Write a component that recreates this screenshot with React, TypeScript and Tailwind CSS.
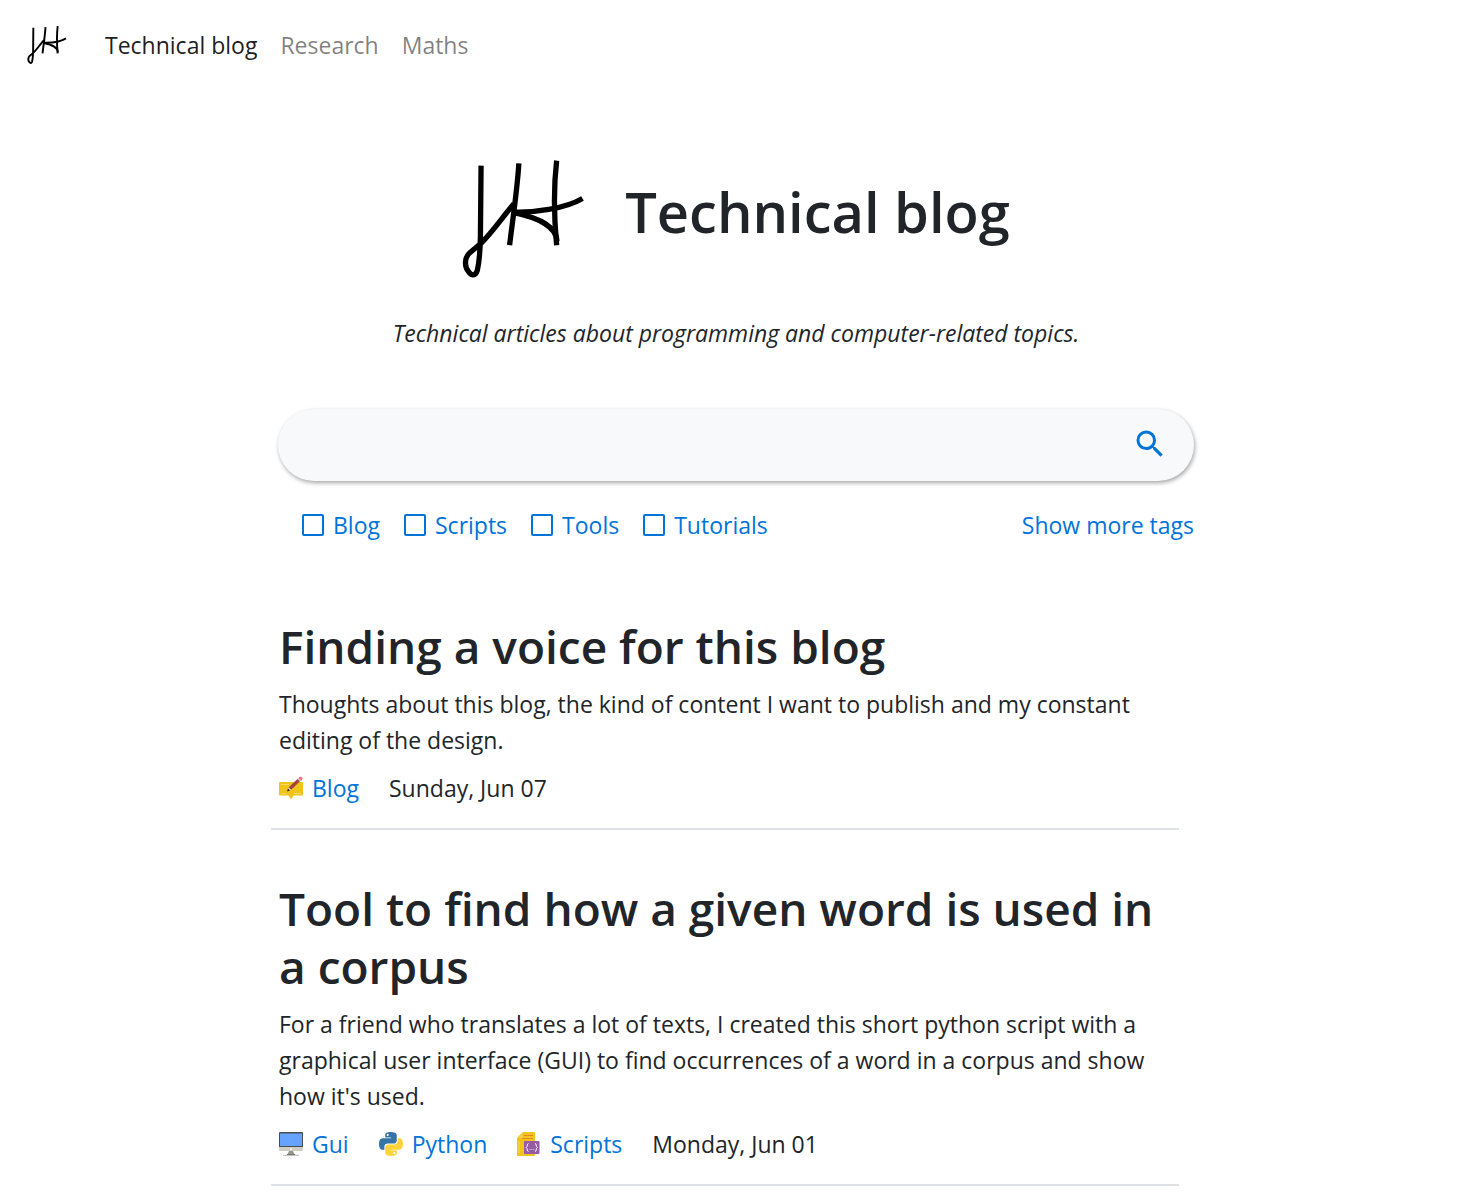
import React from "react";

function Logo({ className, stroke = 16 }: { className: string; stroke?: number }) {
  return (
    <svg viewBox="60 58 370 356" className={className} fill="none" stroke="#000" strokeWidth={stroke} role="img" aria-label="JH">
      <path d="M117 75 L115 290 C114 340 110 372 106 390 C101 408 88 408 80 396 C66 380 66 352 84 337 L116 310 C150 277 178 235 216 190" />
      <path d="M231 68 C226 150 212 240 203 315" />
      <path d="M345 60 C338 120 336 220 345 315" />
      <path d="M212 215 C275 218 370 205 423 174" />
      <path d="M216 217 C290 232 345 260 346 303" />
    </svg>
  );
}

function BlogIcon() {
  return (
    <svg viewBox="0 0 24 24" className="size-6 shrink-0" aria-hidden="true">
      <path d="M1 6h22a1 1 0 0 1 1 1v11.500a1 1 0 0 1-1 1h-8.500L12 23.500l-2.500-4H1a1 1 0 0 1-1-1V7a1 1 0 0 1 1-1z" fill="#f0c419" />
      <path d="M2 8.500h8M2 17.500h5M15 17.500h7" stroke="#f7df7a" strokeWidth="0.800" />
      <path d="M9.500 11.500L19 2.500l2.500 2.300-9.300 9z" fill="#a4453c" />
      <path d="M8 15.500l1.500-4.300 2.900 2.800z" fill="#f3d19c" />
      <path d="M8 15.500l1-2.900 2 1.800z" fill="#222" />
      <path d="M18.300 3l1.200-1 2.700 2.600-1.200 1z" fill="#ccd0d2" />
      <path d="M19.500 2C21-.8 25.600 1.500 22.300 4.700z" fill="#ef6f7c" />
    </svg>
  );
}

function GuiIcon() {
  return (
    <svg viewBox="0 0 24 24" className="size-6 shrink-0" aria-hidden="true">
      <path d="M0 15h24v3a1 1 0 0 1-1 1H1a1 1 0 0 1-1-1z" fill="#cfcdc4" />
      <path d="M0 1a1 1 0 0 1 1-1h22a1 1 0 0 1 1 1v14H0z" fill="#4d4d4f" />
      <path d="M1 1.500h22V14H1z" fill="#66a3ff" />
      <circle cx="12" cy="17" r="1" fill="#f7f5ee" />
      <path d="M10 19h4l1.500 3.500h-7z" fill="#95958f" />
      <path d="M4 22.800h16V24H4z" fill="#c4c2ba" />
      <path d="M8 22h8v1H8z" fill="#77776f" />
    </svg>
  );
}

function PythonIcon() {
  return (
    <svg viewBox="0 0 24 24" className="size-6 shrink-0" aria-hidden="true">
      <path fill="#3774a8" d="M11.900 0C5.800 0 6.200 2.650 6.200 2.650V5.400H12v.8H3.900S0 5.800 0 11.900s3.400 5.900 3.400 5.900h2v-2.850s-.1-3.400 3.350-3.400h5.750s3.250.05 3.250-3.150V3.150S18.200 0 11.900 0zM8.700 1.850a1.050 1.050 0 1 1 0 2.100 1.050 1.050 0 0 1 0-2.100z" />
      <path fill="#ffd43b" d="M12.100 24c6.100 0 5.700-2.650 5.700-2.650V18.600H12v-.8h8.100s3.900.4 3.900-5.700-3.400-5.900-3.400-5.900h-2v2.850s.1 3.400-3.350 3.400H9.500s-3.250-.05-3.250 3.150v5.250S5.800 24 12.100 24zm3.200-1.850a1.050 1.050 0 1 1 0-2.100 1.050 1.050 0 0 1 0 2.100z" />
    </svg>
  );
}

function ScriptsIcon() {
  return (
    <svg viewBox="0 0 24 24" className="size-6 shrink-0" aria-hidden="true">
      <path d="M6 0h11a1 1 0 0 1 1 1v22a1 1 0 0 1-1 1H1a1 1 0 0 1-1-1V6z" fill="#f0c419" />
      <path d="M6 0v5a1 1 0 0 1-1 1H0z" fill="#f3cf45" />
      <path d="M6.500 3.500H16M5 6.500h11" stroke="#e57e25" strokeWidth="0.900" />
      <path d="M2 9v12" stroke="#f7df7a" strokeWidth="0.800" />
      <rect x="7" y="9" width="15.500" height="13" rx="1" fill="#955ba5" />
      <path d="M11.500 11.500c-2 0-.5 3-2.300 4 1.800 1 .3 4 2.300 4M18 11.500c2 0 .5 3 2.300 4-1.800 1-.3 4-2.300 4" fill="none" stroke="#fff" strokeWidth="1" />
      <path d="M12.500 17.500h1M14.400 17.500h1M16.300 17.500h1" stroke="#fff" strokeWidth="0.700" />
    </svg>
  );
}

const filters = ["Blog", "Scripts", "Tools", "Tutorials"];

const articles = [
  {
    title: "Finding a voice for this blog",
    summary:
      "Thoughts about this blog, the kind of content I want to publish and my constant editing of the design.",
    tags: [{ name: "Blog", Icon: BlogIcon }],
    date: "Sunday, Jun 07",
  },
  {
    title: "Tool to find how a given word is used in a corpus",
    summary:
      "For a friend who translates a lot of texts, I created this short python script with a graphical user interface (GUI) to find occurrences of a word in a corpus and show how it's used.",
    tags: [
      { name: "Gui", Icon: GuiIcon },
      { name: "Python", Icon: PythonIcon },
      { name: "Scripts", Icon: ScriptsIcon },
    ],
    date: "Monday, Jun 01",
  },
];

export default function App() {
  return (
    <div className="bg-white pb-4 pl-0.5 font-['Open_Sans','Noto_Sans',sans-serif] text-[23px] leading-9 text-[#212529]">
      <nav className="flex h-[90px] items-center gap-[23px] px-6">
        <a href="#home" className="mr-3.5">
          <Logo className="h-[38px] w-[42px]" stroke={18} />
        </a>
        <a href="#blog" className="text-black/90">Technical blog</a>
        <a href="#research" className="text-black/50">Research</a>
        <a href="#maths" className="text-black/50">Maths</a>
      </nav>

      <main className="mx-auto max-w-[916px] pt-[70px]">
        <header>
          <div className="flex items-center justify-center gap-10">
            <Logo className="h-[118px] w-[123px]" />
            <h1 className="pb-4 text-[56px] leading-[72px] font-semibold">Technical blog</h1>
          </div>
          <p className="mt-[37px] text-center italic">
            Technical articles about programming and computer-related topics.
          </p>
        </header>

        <form role="search" className="mt-[58px]" onSubmit={(e) => e.preventDefault()}>
          <div className="flex h-[72px] items-center rounded-full bg-[#f8f9fb] pr-[26px] pl-8 shadow-[1px_2px_4px_rgba(0,0,0,0.35)]">
            <input type="search" aria-label="Search articles" className="min-w-0 flex-1 bg-transparent outline-none" />
            <button type="submit" aria-label="Search" className="pb-0.5 text-[#0074d9]">
              <svg viewBox="0 0 24 24" className="size-9" fill="currentColor" aria-hidden="true">
                <path d="M15.500 14h-.79l-.28-.27A6.471 6.471 0 0 0 16 9.500 6.500 6.500 0 1 0 9.500 16c1.610 0 3.090-.59 4.230-1.570l.27.28v.79l5 4.990L20.490 19l-4.990-5zm-6 0C7.010 14 5 11.990 5 9.500S7.010 5 9.500 5 14 7.010 14 9.500 11.990 14 9.500 14z" />
              </svg>
            </button>
          </div>
          <div className="mt-[26px] flex items-center justify-between pl-6 text-[#0074d9]">
            <div className="flex gap-6">
              {filters.map((name) => (
                <label key={name} className="flex items-center gap-[9px]">
                  <input
                    type="checkbox"
                    className="size-[22px] appearance-none rounded-xs border-2 border-[#0074d9] checked:bg-[#0074d9]"
                  />
                  {name}
                </label>
              ))}
            </div>
            <button type="button">Show more tags</button>
          </div>
        </form>

        <div className="mt-[74px] mr-[15px] -ml-[7px] flex flex-col gap-[49px]">
          {articles.map(({ title, summary, tags, date }) => (
            <article key={title} className="border-b-2 border-[#dee2e6] px-2 pb-[22px]">
              <h2 className="text-[46px] leading-[58px] font-semibold">{title}</h2>
              <p className="mt-[11px]">{summary}</p>
              <div className="mt-3 flex items-center gap-[30px]">
                {tags.map(({ name, Icon }) => (
                  <a key={name} href={`#${name}`} className="flex items-center gap-[9px] text-[#0074d9]">
                    <Icon />
                    {name}
                  </a>
                ))}
                <time>{date}</time>
              </div>
            </article>
          ))}
        </div>
      </main>
    </div>
  );
}
